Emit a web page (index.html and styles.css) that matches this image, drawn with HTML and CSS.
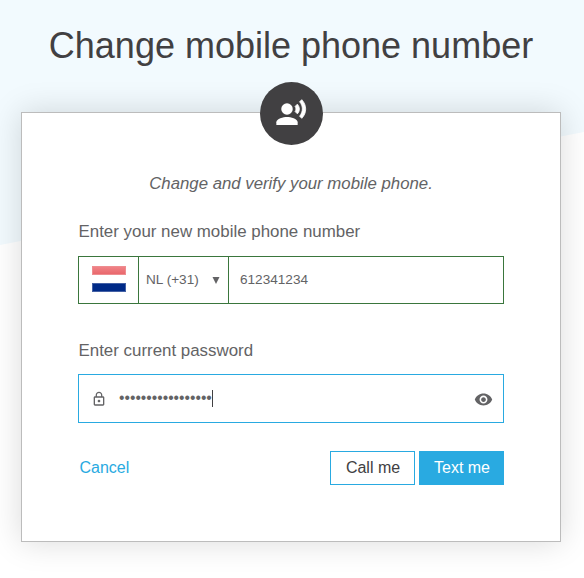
FILE: index.html
```html
<!DOCTYPE html>
<html lang="en">
<head>
  <meta charset="UTF-8">
  <meta name="viewport" content="width=device-width, initial-scale=1.0">
  <title>Change mobile phone number</title>
  <link rel="stylesheet" href="styles.css">
</head>
<body>
  <h1>Change mobile phone number</h1>

  <div class="card">
    <div class="badge">
      <svg class="badge-icon" viewBox="0 0 24 24">
        <circle cx="9" cy="9" r="4.300"/>
        <path d="M9 15c-2.670 0-8 1.340-8 4v2h16v-2c0-2.660-5.330-4-8-4z"/>
        <path class="waves" d="M16.760 5.360l-1.680 1.690c.840 1.180.840 2.710 0 3.890l1.680 1.690c2.020-2.020 2.020-5.070 0-7.270zM20.070 2l-1.630 1.630c2.770 3.020 2.770 7.560 0 10.740L20.070 16c3.900-3.890 3.910-9.950 0-14z"/>
      </svg>
    </div>

    <p class="intro">Change and verify your mobile phone.</p>

    <div class="label">Enter your new mobile phone number</div>
    <div class="field phone">
      <div class="flag-box">
        <div class="flag">
          <span class="flag-red"></span>
          <span class="flag-blue"></span>
        </div>
      </div>
      <div class="country">
        <span>NL (+31)</span>
        <svg class="arrow" viewBox="0 0 8 8"><path d="M0.500 1h7L4 8z"/></svg>
      </div>
      <div class="number">612341234</div>
    </div>

    <div class="label label-password">Enter current password</div>
    <div class="field password">
      <svg class="lock" viewBox="0 0 24 24">
        <path d="M12 17c1.100 0 2-.900 2-2s-.900-2-2-2-2 .900-2 2 .900 2 2 2zm6-9h-1V6c0-2.760-2.240-5-5-5S7 3.240 7 6v2H6c-1.100 0-2 .900-2 2v10c0 1.100.900 2 2 2h12c1.100 0 2-.900 2-2V10c0-1.100-.900-2-2-2zM8.900 6c0-1.710 1.390-3.100 3.100-3.100s3.100 1.390 3.100 3.100v2H8.900V6zM18 20H6V10h12v10z"/>
      </svg>
      <span class="dots">•••••••••••••••••</span>
      <span class="caret"></span>
      <svg class="eye" viewBox="0 0 24 24">
        <path d="M12 4.500C7 4.500 2.730 7.610 1 12c1.730 4.390 6 7.500 11 7.500s9.270-3.110 11-7.500c-1.730-4.390-6-7.500-11-7.500zM12 17c-2.760 0-5-2.240-5-5s2.240-5 5-5 5 2.240 5 5-2.240 5-5 5zm0-8c-1.660 0-3 1.340-3 3s1.340 3 3 3 3-1.340 3-3-1.340-3-3-3z"/>
      </svg>
    </div>

    <div class="actions">
      <a class="cancel">Cancel</a>
      <button class="btn">Call me</button>
      <button class="btn btn-primary">Text me</button>
    </div>
  </div>
</body>
</html>
```
FILE: styles.css
```css
* {
  box-sizing: border-box;
}
body {
  margin: 0;
  height: 578px;
  overflow: hidden;
  font-family: "Liberation Sans", Arial, sans-serif;
  color: #636365;
  background: #f2fafe;
}
/* white slanted area below the light blue header */
body::before {
  content: "";
  position: absolute;
  z-index: -1;
  top: 0;
  left: 0;
  width: 100%;
  height: 578px;
  background: #fff;
  clip-path: polygon(0 245px, 100% 132px, 100% 100%, 0 100%);
}
h1 {
  margin: 0;
  padding: 25px 2px 0 0;
  height: 112px;
  font-size: 36px;
  font-weight: normal;
  line-height: 41px;
  text-align: center;
  color: #414042;
}
.card {
  position: relative;
  width: 540px;
  height: 430px;
  margin-left: 21px;
  padding: 61px 56px 0;
  background: #fff;
  border: 1px solid #bcbcbc;
  box-shadow: 0 0 30px rgba(0, 0, 0, 0.15);
}
.badge {
  position: absolute;
  top: -31px;
  left: 238px;
  width: 63px;
  height: 63px;
  border-radius: 50%;
  background: #414042;
}
.badge-icon {
  display: block;
  width: 32px;
  height: 32px;
  margin: 15px 0 0 15px;
  fill: #fff;
}
.waves {
  stroke: #fff;
  stroke-width: 0.6;
}
.intro {
  margin: 0 0 28px;
  font-size: 16.8px;
  font-style: italic;
  line-height: 20px;
  text-align: center;
}
.label {
  height: 34px;
  padding-left: 0.5px;
  font-size: 16.9px;
  line-height: 20px;
}
.label-password {
  height: 33px;
}
.field {
  display: flex;
  align-items: center;
  border: 1px solid #3a763d;
  font-size: 13.6px;
}
.phone {
  height: 48px;
  margin-bottom: 37px;
}
.flag-box {
  width: 60px;
  height: 46px;
  padding: 9px 0 0 13px;
  border-right: 1px solid #3a763d;
}
.flag {
  display: flex;
  flex-direction: column;
  justify-content: space-between;
  width: 34px;
  height: 26px;
}
.flag-red {
  height: 9px;
  background: linear-gradient(#f08287, #e9686c);
  border: 1px solid #ee8d90;
}
.flag-blue {
  height: 9px;
  background: #002a87;
  border: 1px solid #4461a5;
}
.country {
  display: flex;
  align-items: center;
  justify-content: space-between;
  width: 90px;
  height: 46px;
  padding: 0 8px 2px 7px;
  border-right: 1px solid #3a763d;
}
.arrow {
  width: 8px;
  height: 8px;
  margin-top: 1px;
  fill: #636365;
}
.number {
  padding: 0 0 2px 11px;
}
.password {
  height: 49px;
  padding: 0 10px 0 12px;
  border-color: #29aae1;
}
.lock {
  width: 16px;
  height: 16px;
  fill: #636365;
}
.dots {
  padding-bottom: 2px;
  margin-left: 12px;
  font-size: 15.6px;
}
.caret {
  width: 1px;
  height: 17px;
  background: #414042;
}
.eye {
  width: 19px;
  height: 19px;
  margin: 2px 0 0 auto;
  fill: #636365;
}
.actions {
  display: flex;
  gap: 4px;
  margin-top: 28px;
}
.cancel {
  margin: 0 auto 0 1.5px;
  line-height: 34px;
  color: #29aae1;
}
.btn {
  width: 85px;
  height: 34px;
  padding: 0 0 0 1px;
  border: 1px solid #29aae1;
  background: #fff;
  color: #414042;
  font-family: inherit;
  font-size: 16px;
}
.btn-primary {
  background: #29aae1;
  color: #fff;
}
```
